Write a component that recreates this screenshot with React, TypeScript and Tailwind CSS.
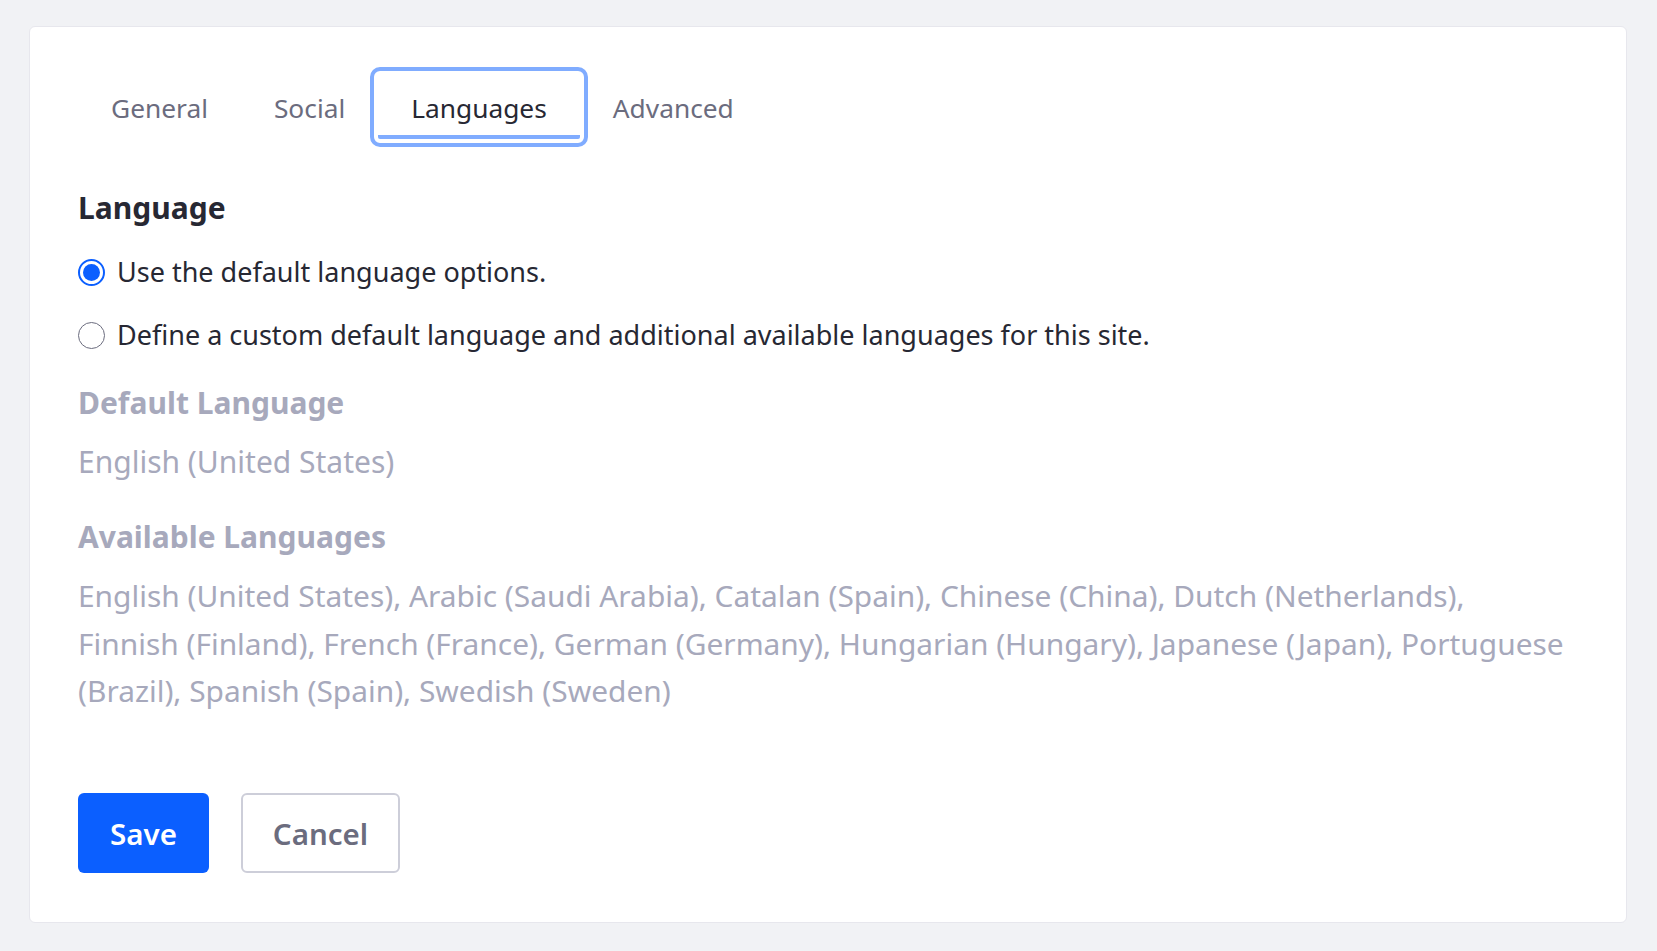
import React from "react";

const font = { fontFamily: '"Noto Sans", "Open Sans", sans-serif' };

function Radio({ checked, label }: { checked?: boolean; label: string }) {
  return (
    <label className="flex items-center h-[40px] gap-[12px] text-[27px] text-[#272833]">
      {checked ? (
        <span className="w-[27px] h-[27px] rounded-full border-[2px] border-[#0b5fff] flex items-center justify-center bg-white">
          <span className="w-[17px] h-[17px] rounded-full bg-[#0b5fff]" />
        </span>
      ) : (
        <span className="w-[27px] h-[27px] rounded-full border border-[#6b6c7e] bg-white" />
      )}
      <span className="whitespace-nowrap">{label}</span>
    </label>
  );
}

export default function App() {
  const tabs = ["General", "Social", "Languages", "Advanced"];
  return (
    <div className="min-h-[951px] bg-[#f1f2f5] pl-[29px] pr-[30px] pt-[26px] pb-[28px]" style={font}>
      <div className="bg-white border border-[#e7e7ed] rounded-[6px] px-[48px] pt-[48px] pb-[49px]">
        <div className="flex">
          {tabs.map((t) =>
            t === "Languages" ? (
              <div
                key={t}
                className="h-[64px] px-[33px] flex items-center text-[26.3px] text-[#272833] border-b-[4px] border-[#80acff] outline-[4px] outline-solid outline-[#80acff] outline-offset-[4px] rounded-[2px]"
              >
                <span className="pt-[8px]">{t}</span>
              </div>
            ) : (
              <div key={t} className="h-[64px] px-[33px] flex items-center text-[26.3px] text-[#6b6c7e]">
                <span className="pt-[4px]">{t}</span>
              </div>
            )
          )}
        </div>

        <h3 className="mt-[49px] h-[40px] leading-[40px] text-[30px] font-bold text-[#272833]">Language</h3>

        <div className="mt-[24px]">
          <Radio checked label="Use the default language options." />
        </div>
        <div className="mt-[23px]">
          <Radio label="Define a custom default language and additional available languages for this site." />
        </div>

        <div className="mt-[28px] h-[40px] leading-[40px] text-[30px] font-bold text-[#a7a9bc]">Default Language</div>
        <div className="mt-[19px] h-[40px] leading-[40px] text-[30px] text-[#a7a9bc]">English (United States)</div>

        <div className="mt-[35px] h-[40px] leading-[40px] text-[30px] font-bold text-[#a7a9bc]">Available Languages</div>
        <div className="mt-[15px] text-[29.9px] leading-[47.5px] text-[#a7a9bc]">
          <div className="whitespace-nowrap">
            English (United States), Arabic (Saudi Arabia), Catalan (Spain), Chinese (China), Dutch (Netherlands),
          </div>
          <div className="whitespace-nowrap">
            Finnish (Finland), French (France), German (Germany), Hungarian (Hungary), Japanese (Japan), Portuguese
          </div>
          <div className="whitespace-nowrap">(Brazil), Spanish (Spain), Swedish (Sweden)</div>
        </div>

        <div className="mt-[78px] flex gap-[32px]">
          <button className="w-[131px] h-[80px] pt-[3px] rounded-[6px] bg-[#0b5fff] text-white text-[29.5px] font-semibold">
            Save
          </button>
          <button className="w-[159px] h-[80px] pt-[3px] rounded-[6px] bg-white border-2 border-[#cdced9] text-[#6b6c7e] text-[29.5px] font-semibold">
            Cancel
          </button>
        </div>
      </div>
    </div>
  );
}
